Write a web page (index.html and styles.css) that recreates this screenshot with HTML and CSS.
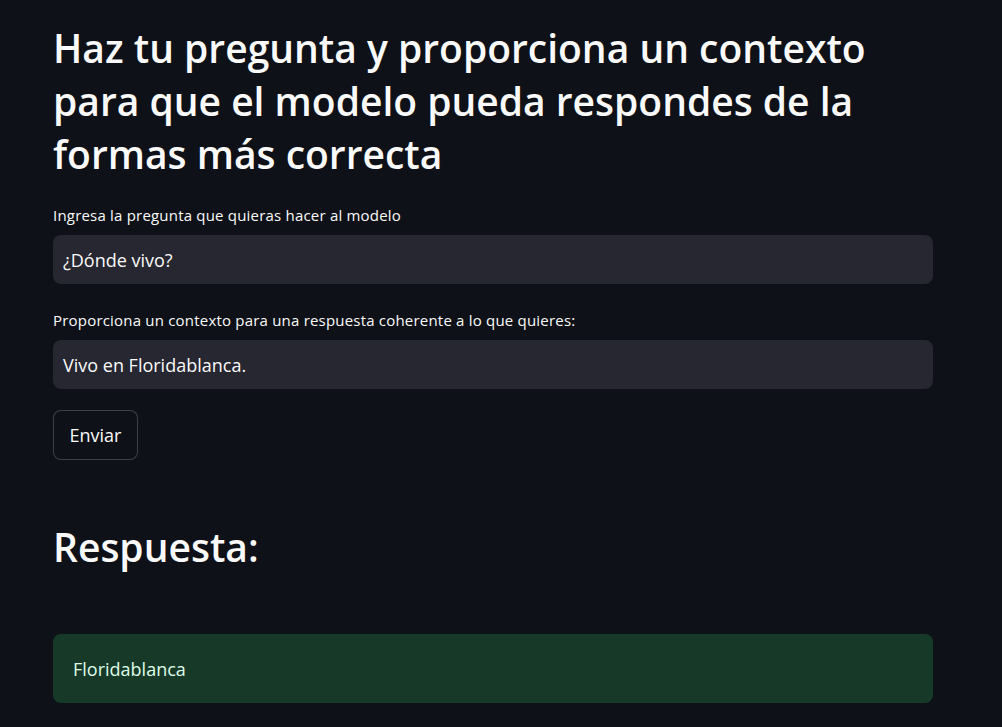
FILE: index.html
```html
<!DOCTYPE html>
<html lang="es">
<head>
<meta charset="utf-8">
<title>Pregunta</title>
<link rel="stylesheet" href="styles.css">
</head>
<body>
<main class="block">
  <h1 class="title">Haz tu pregunta y proporciona un contexto para que el modelo pueda respondes de la formas más correcta</h1>
  <div class="field">
    <label class="label">Ingresa la pregunta que quieras hacer al modelo</label>
    <div class="input">¿Dónde vivo?</div>
  </div>
  <div class="field">
    <label class="label">Proporciona un contexto para una respuesta coherente a lo que quieres:</label>
    <div class="input">Vivo en Floridablanca.</div>
  </div>
  <div class="btn-row"><button class="btn">Enviar</button></div>
  <h2 class="subtitle">Respuesta:</h2>
  <div class="success">Floridablanca</div>
</main>
</body>
</html>
```
FILE: styles.css
```css
html, body {
  margin: 0;
  padding: 0;
  background: #0e1117;
  color: #fafafa;
  font-family: "Open Sans", "Noto Sans", sans-serif;
}
.block {
  width: 880px;
  margin-left: 53px;
  padding-top: 21px;
  display: flex;
  flex-direction: column;
}
.title {
  margin: 0;
  font-size: 39px;
  line-height: 53px;
  font-weight: 600;
}
.field {
  display: flex;
  flex-direction: column;
  margin-top: 25px;
}
.field + .field {
  margin-top: 26px;
}
.label {
  font-size: 15px;
  line-height: 20px;
  margin-bottom: 10px;
  letter-spacing: 0.2px;
}
.input {
  height: 49px;
  background: #262730;
  border-radius: 8px;
  padding: 0 10px;
  display: flex;
  align-items: center;
  font-size: 18px;
}
.btn-row {
  margin-top: 21px;
}
.btn {
  height: 50px;
  width: 85px;
  border: 1px solid rgba(250,250,250,0.2);
  background: #0e1117;
  color: #fafafa;
  border-radius: 8px;
  font-family: inherit;
  font-size: 18px;
}
.subtitle {
  margin: 62px 0 0 0;
  font-size: 39px;
  line-height: 50px;
  font-weight: 600;
}
.success {
  margin-top: 62px;
  height: 69px;
  background: #173928;
  border-radius: 8px;
  color: #dffde9;
  padding: 0 20px;
  display: flex;
  align-items: center;
  font-size: 18px;
}
```
